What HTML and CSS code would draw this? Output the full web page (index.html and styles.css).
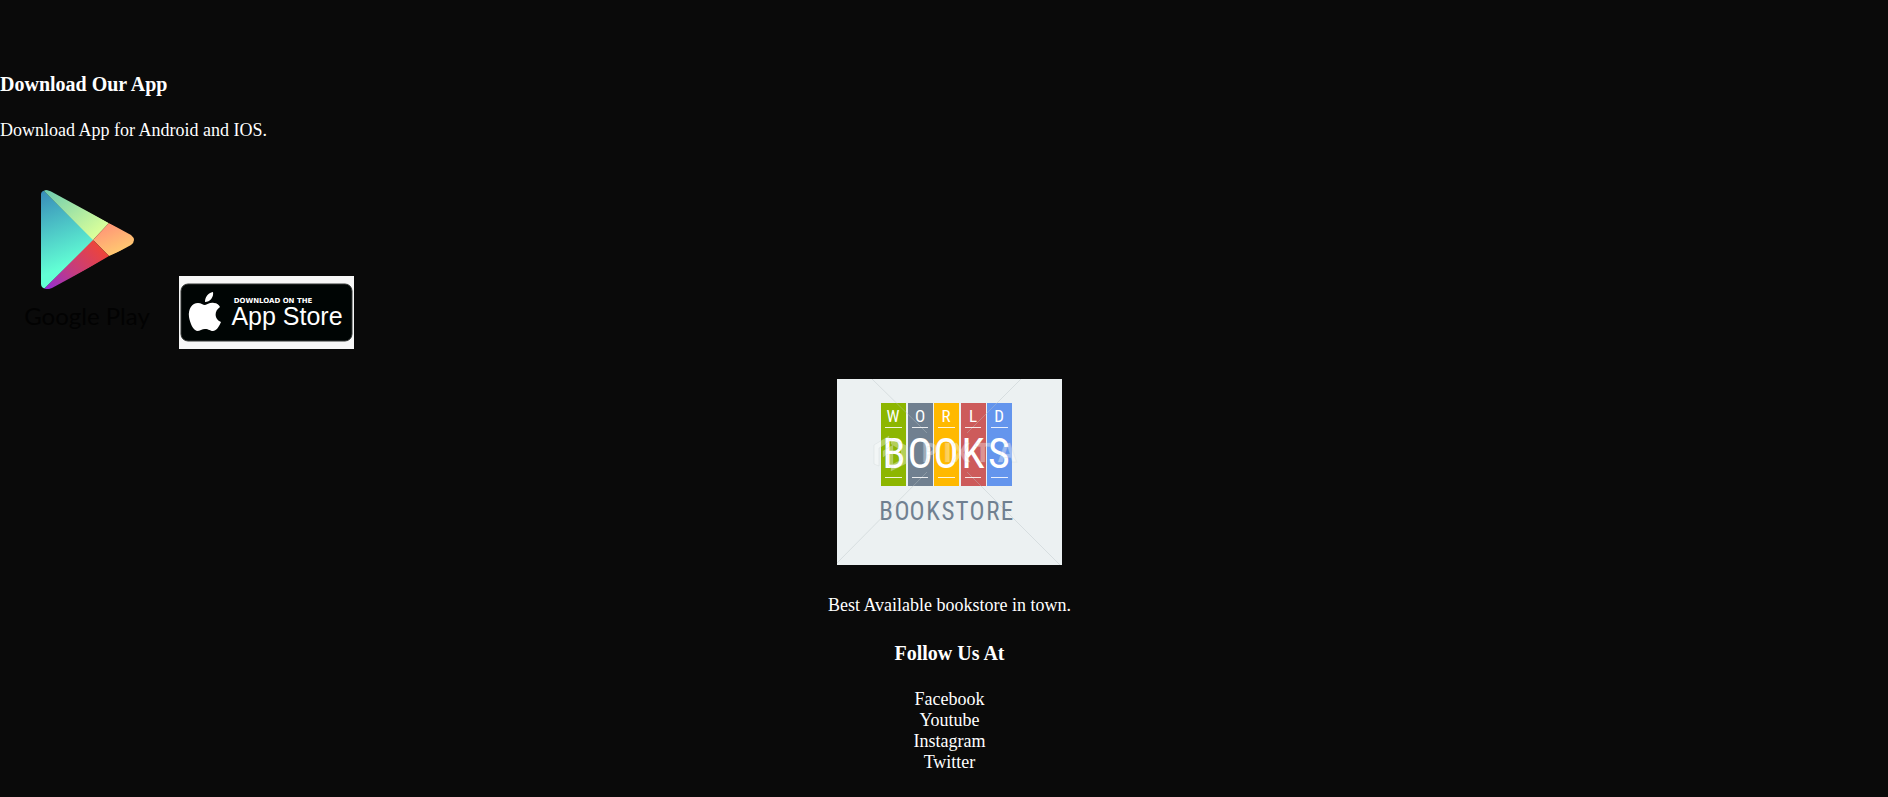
FILE: index.html
```html
<!DOCTYPE html>
<html lang="en">
<head>
<meta charset="utf-8">
<meta name="viewport" content="width=device-width, initial-scale=1">
<title>Bookstore</title>
<link rel="stylesheet" href="styles.css">
</head>
<body>
<footer class="footer">
  <section class="download">
    <h3 class="heading">Download Our App</h3>
    <p class="text">Download App for Android and IOS.</p>
    <div class="stores">
      <svg class="play" viewBox="0 0 175 175" role="img" aria-label="Google Play">
        <defs>
          <linearGradient id="blue" x1="0" y1="0" x2="0.2" y2="1"><stop offset="0" stop-color="#3686b8"/><stop offset="0.82" stop-color="#62ffd4"/><stop offset="1" stop-color="#62ffd4"/></linearGradient>
          <linearGradient id="green" x1="0" y1="0" x2="1" y2="1"><stop offset="0" stop-color="#68c9b0"/><stop offset="0.85" stop-color="#d9ff9a"/></linearGradient>
          <linearGradient id="orange" x1="0" y1="0" x2="0.6" y2="1"><stop offset="0" stop-color="#ff8a78"/><stop offset="1" stop-color="#ffcf70"/></linearGradient>
          <linearGradient id="red" x1="0" y1="1" x2="1" y2="0.3"><stop offset="0" stop-color="#8a2be0"/><stop offset="0.5" stop-color="#c43c80"/><stop offset="1" stop-color="#ee4438"/></linearGradient>
          <clipPath id="tri"><path d="M46 16c2 0 4 1 6 2l79 43q6 5 0 10l-79 43c-2 1-4 1-6 1q-5-1-5-5V20q0-3 5-4z"/></clipPath>
        </defs>
        <g clip-path="url(#tri)">
          <path fill="url(#blue)" d="M41 13l3 4 50 49-50 49-3 3z"/>
          <path fill="url(#green)" d="M42 14h6l61 35-16 17-49-49z"/>
          <path fill="url(#orange)" d="M109 49l30 14v6l-30 13-16-16z"/>
          <path fill="url(#red)" d="M93 66l16 16-61 36-6-1z"/>
        </g>
        <text class="play-name" x="87" y="151" text-anchor="middle">Google Play</text>
      </svg>
      <svg class="apple" viewBox="0 0 175 73" role="img" aria-label="Download on the App Store">
        <rect width="175" height="73" fill="#f7f7f7"/>
        <rect x="2" y="8" width="171" height="57" rx="7" fill="#000504" stroke="#303432"/>
        <path fill="#fff" d="M34 16c1 5-3 10-8 10 0-5 3-9 8-10zM26 29c2 0 5-3 9-2 3 0 5 2 6 4-6 4-6 12 1 15-2 5-5 9-8 9-3 0-4-2-8-2-3 0-5 2-8 2-4-1-7-8-8-14-1-8 3-14 9-14 3 0 5 2 7 2z"/>
        <text class="apple-small" x="94" y="27" text-anchor="middle">DOWNLOAD ON THE</text>
        <text class="apple-name" x="108" y="49" text-anchor="middle">App Store</text>
      </svg>
    </div>
  </section>
  <section class="about">
    <svg class="logo" viewBox="0 0 225 186" role="img" aria-label="World Books Bookstore">
      <rect width="225" height="186" fill="#ecf1f2"/>
      <g>
        <rect x="44" y="24" width="25" height="83" fill="#8db600"/>
        <rect x="71" y="24" width="25" height="83" fill="#708090"/>
        <rect x="97" y="24" width="25" height="83" fill="#ffb900"/>
        <rect x="124" y="24" width="25" height="83" fill="#cd5b5b"/>
        <rect x="150" y="24" width="25" height="83" fill="#6495ed"/>
      </g>
      <path fill="none" stroke="#b8c3c5" stroke-opacity=".4" d="M35 0l55 54M184 0l-54 54M0 184l90-91M130 93l93 93"/>
      <path stroke="#fff" stroke-opacity=".85" d="M48 48.500h17M75 48.500h16M101 48.500h17M128 48.500h16M154 48.500h17M48 98.500h17M75 98.500h16M101 98.500h17M128 98.500h16M154 98.500h17"/>
      <text class="world" text-anchor="middle" x="56 83 109 136 162" y="43">WORLD</text>
      <text class="books" text-anchor="middle" x="57 83 109 136 162" y="89">BOOKS</text>
      <text class="bookstore" text-anchor="middle" x="49 65 80 96 111 125 140 156 170" y="141">BOOKSTORE</text>
      <g class="watermark">
        <path d="M37 66l15-9v6l-10 6v18l-5-2zM46 72l10-6v24l-5-3V75l-5 3zM54 59l16 8v17l-16 8v-6l10-5V71l-10-6z"/>
        <text class="mark" x="84 106 115 138 161" y="83">PIXTA</text>
      </g>
    </svg>
    <p class="text">Best Available bookstore in town.</p>
    <h3 class="heading">Follow Us At</h3>
    <ul class="links">
      <li><a href="#">Facebook</a></li>
      <li><a href="#">Youtube</a></li>
      <li><a href="#">Instagram</a></li>
      <li><a href="#">Twitter</a></li>
    </ul>
  </section>
</footer>
</body>
</html>
```
FILE: styles.css
```css
body {
  margin: 0;
  background: #0a0a0a;
  color: #fff;
  font: 18px/21px "Liberation Serif", "Times New Roman", serif;
}
.footer { padding: 72px 0 24px; }
.heading { margin: 0; font-size: 20px; line-height: 24px; }
.text { margin: 0; }
.download .text { margin-top: 24px; }
.stores { display: flex; align-items: flex-end; gap: 4px; margin-top: 33px; }
.play { width: 175px; height: 175px; }
.apple { width: 175px; height: 73px; }
.play-name { font: 24px Lato, sans-serif; fill: #020202; }
.apple-small { font: bold 7px "DejaVu Sans", sans-serif; fill: #fff; }
.apple-name { font: 25px "Liberation Sans", Arial, sans-serif; fill: #fff; }
.about {
  display: flex;
  flex-direction: column;
  align-items: center;
  margin-top: 30px;
  padding-left: 11px;
}
.logo { width: 225px; height: 186px; }
.about .text { margin-top: 30px; }
.about .heading { margin-top: 25px; }
.links { margin: 24px 0 0; padding: 0; list-style: none; text-align: center; }
.links a { color: inherit; text-decoration: none; }
.watermark { fill: #fff; fill-opacity: .35; stroke: #b8c3c5; stroke-opacity: .2; }
.mark { font: bold 27px "Open Sans", sans-serif; }
.world, .books, .bookstore { font-family: "Roboto Condensed", "Open Sans Condensed", Roboto, sans-serif; }
.world { font-size: 17px; fill: #fff; }
.books { font-size: 42px; fill: #fff; }
.bookstore { font-size: 25px; fill: #708090; }
```
